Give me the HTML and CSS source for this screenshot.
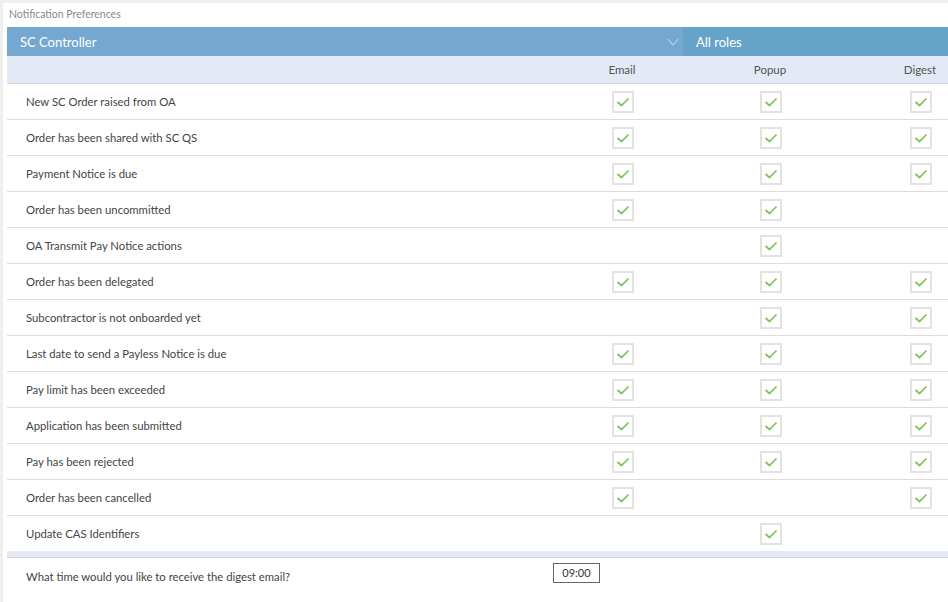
FILE: index.html
```html
<!DOCTYPE html>
<html>
<head>
<meta charset="utf-8">
<link rel="stylesheet" href="styles.css">
</head>
<body>
<div class="panel">
  <div class="title">Notification Preferences</div>
  <div class="bar">
    <div class="role-select">
      <span>SC Controller</span>
      <svg class="chev" width="12" height="8" viewBox="0 0 12 8"><polyline points="1,1 6,7 11,1" fill="none" stroke="#a9c9e2" stroke-width="1.3"/></svg>
    </div>
    <div class="roles">All roles</div>
  </div>
  <div class="grid head">
    <div></div><div class="c">Email</div><div class="c">Popup</div><div class="c d">Digest</div>
  </div>
  <div id="rows"></div>
  <div class="strip"></div>
  <div class="digest">
    <div class="q">What time would you like to receive the digest email?</div>
    <div class="time">09:00</div>
  </div>
</div>
<script>
const data = [
 ["New SC Order raised from OA",1,1,1],
 ["Order has been shared with SC QS",1,1,1],
 ["Payment Notice is due",1,1,1],
 ["Order has been uncommitted",1,1,0],
 ["OA Transmit Pay Notice actions",0,1,0],
 ["Order has been delegated",1,1,1],
 ["Subcontractor is not onboarded yet",0,1,1],
 ["Last date to send a Payless Notice is due",1,1,1],
 ["Pay limit has been exceeded",1,1,1],
 ["Application has been submitted",1,1,1],
 ["Pay has been rejected",1,1,1],
 ["Order has been cancelled",1,0,1],
 ["Update CAS Identifiers",0,1,0]
];
const box = '<span class="cb"><svg width="18" height="18" viewBox="0 0 18 18"><polyline points="3.5,9 7.5,12.5 14.5,5.5" fill="none" stroke="#7cc458" stroke-width="1.7"/></svg></span>';
const rows = document.getElementById('rows');
rows.innerHTML = data.map(r => '<div class="grid row"><div class="lbl">'+r[0]+'</div>' +
  [1,2,3].map(i => '<div class="c'+(i===3?' d':'')+'">'+(r[i]?box:'')+'</div>').join('') + '</div>').join('');
</script>
</body>
</html>
```
FILE: styles.css
```css
html, body { margin: 0; padding: 0; overflow: hidden; }
body {
  background: #efefef;
  font-family: Lato, "Open Sans", sans-serif;
  color: #444;
  width: 948px;
  height: 602px;
}
.panel {
  background: #fff;
  margin: 3px 0 0 3px;
  padding: 0 0 0 4px;
  width: 945px;
  height: 599px;
  box-sizing: border-box;
  overflow: hidden;
}
.title {
  font-size: 10.5px;
  color: #8a8a8a;
  height: 24px;
  line-height: 23px;
  padding-left: 2px;
}
.bar {
  display: flex;
  height: 29px;
  color: #fff;
  font-size: 13px;
}
.role-select {
  width: 676px;
  background: #74a8d1;
  display: flex;
  align-items: center;
  justify-content: space-between;
  padding: 0 4px 0 13px;
  box-sizing: border-box;
}
.chev { margin-top: 1px; }
.roles {
  flex: 1;
  background: #66a3c9;
  display: flex;
  align-items: center;
  padding-left: 13px;
}
.grid {
  display: grid;
  grid-template-columns: 542px 148px 148px 1fr;
  align-items: center;
}
.head {
  height: 27px;
  background: #e3eaf5;
  border-bottom: 1px solid #d3d7dc;
  font-size: 11.5px;
  color: #555;
}
.head .c { padding-right: 2px; }
.head .c.d { padding-left: 47px; padding-right: 0; }
.c { display: flex; justify-content: center; align-items: center; }
.c.d { padding-left: 49px; }
.row {
  height: 35px;
  border-bottom: 1px solid #dcdcdc;
  font-size: 11.3px;
}
.row:last-child { border-bottom: none; }
.lbl { padding-left: 19px; color: #444; }
.cb {
  width: 18px;
  height: 18px;
  border: 2px solid #e2e2e2;
  background: #fff;
  display: block;
}
.cb svg { display: block; }
.strip {
  height: 6px;
  background: #e3eaf5;
  border-bottom: 1px solid #d3d7dc;
}
.digest {
  display: grid;
  grid-template-columns: 546px auto;
  align-items: start;
  font-size: 11.3px;
}
.q { padding-left: 19px; padding-top: 12px; }
.time {
  width: 45px;
  height: 18px;
  border: 1px solid #666;
  font-size: 11px;
  line-height: 18px;
  text-align: center;
  color: #333;
  margin-top: 5px;
}
```
